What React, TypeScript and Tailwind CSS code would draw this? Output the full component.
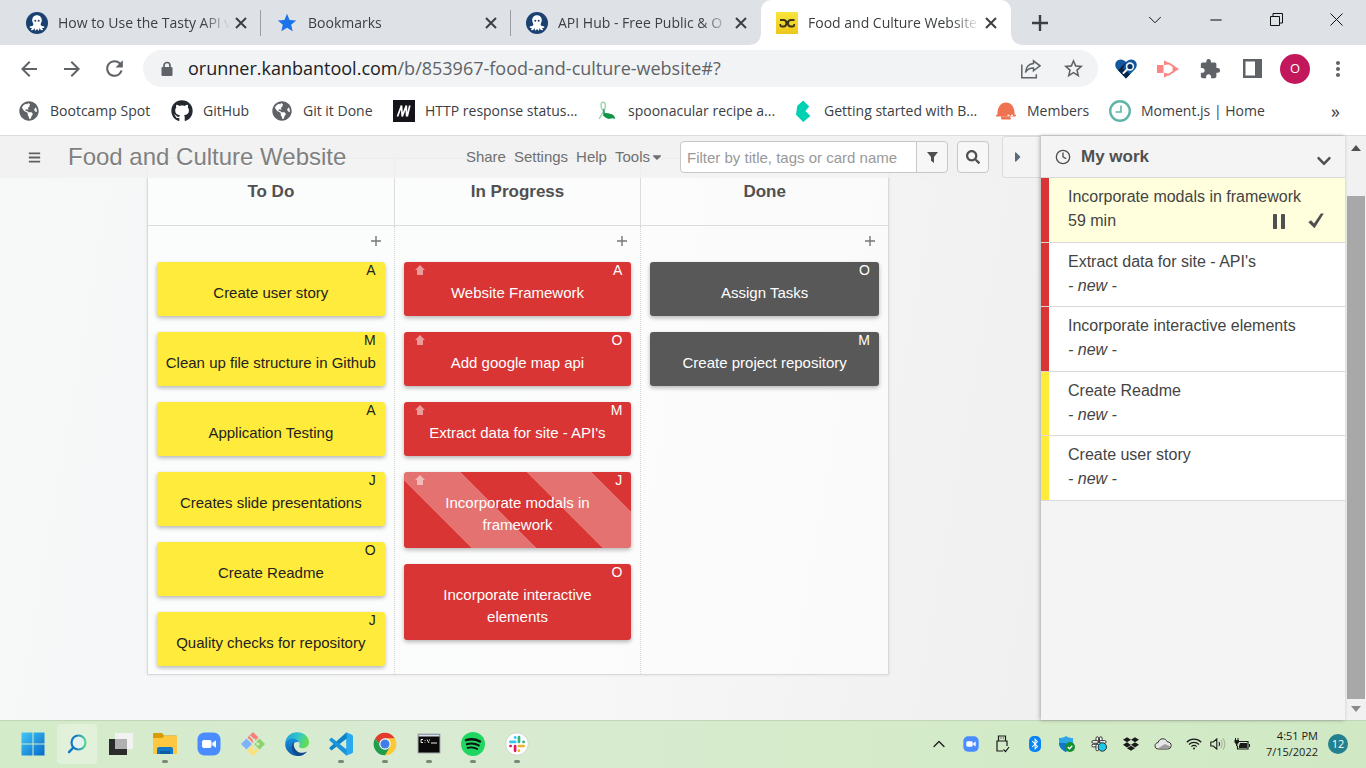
import React from "react";
import {
  MdArrowBack,
  MdArrowForward,
  MdRefresh,
  MdStarBorder,
  MdStar,
  MdExtension,
  MdMoreVert,
} from "react-icons/md";
import {
  FaBars,
  FaBluetoothB,
  FaCaretDown,
  FaCaretRight,
  FaChevronDown,
  FaDropbox,
  FaGithub,
  FaGlobeAmericas,
  FaSearch,
} from "react-icons/fa";
import { ChevronDown, ChevronUp, Minus, Clock } from "lucide-react";

/* ---------- small drawings ---------- */

function Octopus() {
  return (
    <svg viewBox="0 0 22 22" className="size-[22px] shrink-0" aria-hidden="true">
      <circle cx="11" cy="11" r="11" fill="#1b4171" />
      <path
        d="M11 3.2c-3 0-4.8 2.200-4.800 4.900 0 1.700.7 2.700 1.100 3.900.3 1.100-.6 2.300-2.300 2.300-.9 0-1.400.3-1.400.8 0 .7 1.200 1.100 2.500.9-.4.8-1.200 1.100-1.100 1.700.1.800 1.900.6 2.900-.4.500-.5.800-1 1.100-1.500-.2 1.300-.5 2.300.1 2.700.6.300 1.300-.5 1.900-1.700.6 1.200 1.300 2 1.900 1.700.6-.4.3-1.400.1-2.700.3.500.6 1 1.100 1.500 1 1 2.800 1.200 2.900.4.100-.6-.7-.9-1.100-1.700 1.300.2 2.500-.2 2.500-.9 0-.5-.5-.8-1.400-.8-1.700 0-2.600-1.200-2.300-2.300.4-1.200 1.100-2.200 1.100-3.900 0-2.700-1.800-4.900-4.800-4.900z"
        fill="#fff"
      />
      <circle cx="9.300" cy="8.800" r="1" fill="#1b4171" />
      <circle cx="12.700" cy="8.800" r="1" fill="#1b4171" />
    </svg>
  );
}

function KanbanLogo() {
  return (
    <svg viewBox="0 0 22 22" className="size-[22px] shrink-0" aria-hidden="true">
      <defs>
        <linearGradient id="kb" x1="0" y1="0" x2="0" y2="1">
          <stop offset="0" stopColor="#f7e53c" />
          <stop offset="1" stopColor="#eec61b" />
        </linearGradient>
      </defs>
      <rect width="22" height="22" fill="url(#kb)" />
      <path
        d="M4 8h3.500c2 0 2.800 1 2.800 3.200S9.500 14.500 7.500 14.500H6c-1.200 0-1.700-.6-1.700-1.800V12M18.500 8H15c-2 0-2.900 1-2.900 3.200s.9 3.300 2.900 3.300h1.500c1.200 0 1.700-.6 1.700-1.800V12M9.800 9l2.800 4.500M12.600 9L9.800 13.500"
        fill="none"
        stroke="#3b3416"
        strokeWidth="1.800"
      />
    </svg>
  );
}

function CloseIcon() {
  return (
    <svg viewBox="0 0 12 12" className="size-3" stroke="#3c4043" strokeWidth="2" aria-hidden="true">
      <path d="M1 1l10 10M11 1L1 11" />
    </svg>
  );
}

function PlusIcon() {
  return (
    <svg viewBox="0 0 16 16" className="size-4" stroke="#3c4043" strokeWidth="2.400" aria-hidden="true">
      <path d="M8 0v16M0 8h16" />
    </svg>
  );
}

function LockIcon() {
  return (
    <svg viewBox="0 0 12 16" className="h-4 w-3 shrink-0" aria-hidden="true">
      <path d="M3 6.500V4.500a3 3 0 0 1 6 0v2" fill="none" stroke="#5f6368" strokeWidth="1.700" />
      <rect x=".5" y="6" width="11" height="9" rx="1.200" fill="#5f6368" />
    </svg>
  );
}

function ShareIcon() {
  return (
    <svg viewBox="0 0 20 20" className="size-5" fill="none" stroke="#5f6368" strokeWidth="1.500" aria-hidden="true">
      <path d="M.8 5.500v13.300h14.500v-3.500" />
      <path d="M12.500 1.800l6.500 5-6.500 5V9C8.500 9 6 10.500 4.500 13.500 5 8.500 7.500 5 12.500 4.600z" />
    </svg>
  );
}

function HeartSearch() {
  return (
    <svg viewBox="0 0 22 20" className="h-5 w-[22px]" aria-hidden="true">
      <path d="M11 19.500L1.800 10C-.8 7 0 2.600 3.200 1 6-.3 9 .6 11 3c2-2.400 5-3.300 7.800-2C22 2.600 22.800 7 20.200 10z" fill="#1459a0" />
      <path d="M11 3L3 11.300l8 8.200 4-4.200-7-6z" fill="#0a2547" />
      <circle cx="15" cy="7.500" r="3.400" fill="#0b3564" stroke="#eef6fc" strokeWidth="1.600" />
      <path d="M12.300 10.200L8.500 14" stroke="#eef6fc" strokeWidth="2" strokeLinecap="round" />
    </svg>
  );
}

function CastArrow() {
  return (
    <svg viewBox="0 0 22 18" className="h-[18px] w-[22px]" aria-hidden="true">
      <rect x="0" y="5" width="6.500" height="8" fill="#fb8583" />
      <path d="M7 .3l5.500 3.200L7 5.200zM7 17.700l5.500-3.200L7 12.800zM16 5.200L22 9l-6 3.800z" fill="#fb8583" />
      <path d="M7.500 3.500H12l4.500 3v5l-4.500 3H7.500" fill="none" stroke="#fb8583" strokeWidth="1.800" />
    </svg>
  );
}

function SidePanelIcon() {
  return (
    <svg viewBox="0 0 19 19" className="size-[19px]" aria-hidden="true">
      <rect width="19" height="19" fill="#5f6368" />
      <rect x="2.500" y="2.500" width="9.500" height="14" fill="#fff" />
    </svg>
  );
}

function MdnIcon() {
  return (
    <svg viewBox="0 0 22 22" className="size-[22px]" aria-hidden="true">
      <rect width="22" height="22" fill="#15141a" />
      <path d="M4.500 16.500L8.500 5.500 9.200 16.500 13.300 5.500 13.600 16.500M16.800 5.500L14.200 16.500" stroke="#fff" strokeWidth="1.700" fill="none" />
    </svg>
  );
}

function SpoonacularIcon() {
  return (
    <svg viewBox="0 0 22 22" className="size-[22px]" aria-hidden="true">
      <path d="M6.500 10C4.500 7 4.500 2.500 7 2.300s3.200 4 1.500 7.200L3.200 18.800" fill="none" stroke="#a5d6b4" strokeWidth="1.600" />
      <path d="M7.500 9l.8 5" stroke="#3aa765" strokeWidth="1.800" />
      <path d="M7.500 13.500c2.500-1 4.500-.3 6.500.3 2.800.5 4.800 2 5.300 5.200-2-1-3.500-1-5.500-.2-2.500.7-4.500-1.500-6.800-3.300z" fill="#12954a" />
    </svg>
  );
}

function BulmaIcon() {
  return (
    <svg viewBox="0 0 22 22" className="size-[22px]" aria-hidden="true">
      <path d="M4 14.800L5.300 5.800 11.200.5l6 6-3.800 4.500 5 5-7.200 6z" fill="#00d1b2" />
    </svg>
  );
}

function MembersIcon() {
  return (
    <svg viewBox="0 0 22 22" className="size-[22px]" aria-hidden="true">
      <path d="M2.500 15C2 7 6 2.500 11 2.500S20 7 19.500 15z" fill="#ef7350" />
      <path d="M2 15.500h18M7 18.500h8" stroke="#ef7350" strokeWidth="2" strokeLinecap="round" />
      <path d="M6 17.200h9" stroke="#ef7350" strokeWidth="1.500" />
      <path d="M12.500 15.300h2M16 15.300h2" stroke="#fff" strokeWidth="1.200" />
    </svg>
  );
}

function MomentIcon() {
  return (
    <svg viewBox="0 0 22 22" className="size-[22px]" aria-hidden="true">
      <circle cx="11" cy="11" r="9.800" fill="#fff" stroke="#60b5a8" strokeWidth="2.400" />
      <path d="M12 5.500V12H6.500" fill="none" stroke="#60b5a8" strokeWidth="1.600" />
    </svg>
  );
}

function PriorityArrow() {
  return (
    <svg viewBox="0 0 10 10" className="size-[10px]" aria-hidden="true">
      <path d="M5 0l5 5H8v5H2V5H0z" fill="#fff" fillOpacity=".5" />
    </svg>
  );
}

function FunnelIcon() {
  return (
    <svg viewBox="0 0 11 11" className="size-[11px]" aria-hidden="true">
      <path d="M0 0h11L7 5v6L4 8.800V5z" fill="#505050" />
    </svg>
  );
}

function PauseIcon() {
  return (
    <svg viewBox="0 0 12 15" className="h-[15px] w-3" fill="#505050" aria-hidden="true">
      <rect x="0" y="0" width="4" height="15" rx=".8" />
      <rect x="8" y="0" width="4" height="15" rx=".8" />
    </svg>
  );
}

function CheckIcon() {
  return (
    <svg viewBox="0 0 16 16" className="size-4" aria-hidden="true">
      <path d="M.3 9.300L3 7.200l3 3.300L12.800.5h3L6.500 15.300z" fill="#505050" />
    </svg>
  );
}

/* ---------- taskbar drawings ---------- */

function WindowsIcon() {
  return (
    <svg viewBox="0 0 24 24" className="size-6" aria-hidden="true">
      <defs>
        <linearGradient id="win" x1="0" y1="0" x2="1" y2="1">
          <stop offset="0" stopColor="#42c8f7" />
          <stop offset="1" stopColor="#0669c9" />
        </linearGradient>
      </defs>
      <path d="M.5.500h11v11H.5zM12.500.500h11v11h-11zM.5 12.500h11v11H.5zM12.500 12.500h11v11h-11z" fill="url(#win)" />
    </svg>
  );
}

function TaskSearchIcon() {
  return (
    <svg viewBox="0 0 20 20" className="size-5" fill="none" strokeLinecap="round" aria-hidden="true">
      <defs>
        <linearGradient id="ts" x1="0" y1="0" x2="1" y2="0">
          <stop offset=".3" stopColor="#1378c4" />
          <stop offset="1" stopColor="#55d88f" />
        </linearGradient>
      </defs>
      <circle cx="11.500" cy="8.500" r="7" fill="#e3f2ee" stroke="url(#ts)" strokeWidth="2.200" />
      <path d="M6.300 13.700L2 18.200" stroke="#1378c4" strokeWidth="2.400" />
    </svg>
  );
}

function TaskViewIcon() {
  return (
    <svg viewBox="0 0 24 24" className="size-6" aria-hidden="true">
      <rect x="0" y="7" width="18" height="16" fill="#2b2b2b" />
      <rect x="6" y="1" width="18" height="16" fill="#f2f2f2" />
      <rect x="6" y="7" width="12" height="10" fill="#b0b0b0" />
    </svg>
  );
}

function FolderIcon() {
  return (
    <svg viewBox="0 0 24 24" className="size-6" aria-hidden="true">
      <path d="M0 2q0-1 1-1h8l2 2.500h12q1 0 1 1V12H0z" fill="#d99a05" />
      <path d="M0 6h9l2.500-2H23q1 0 1 1v16q0 1-1 1H1q-1 0-1-1z" fill="#fdc83f" />
      <path d="M4 22v-5q0-2 2-2h12q2 0 2 2v5z" fill="#1177c9" />
      <path d="M7 19h10v3H7z" fill="#0a5ca5" />
    </svg>
  );
}

function ZoomAppIcon({ small = false }: { small?: boolean }) {
  return (
    <svg viewBox="0 0 24 24" className={small ? "size-4" : "size-6"} aria-hidden="true">
      <rect x=".5" y=".5" width="23" height="23" rx="7" fill="#4a8cff" />
      <rect x="5" y="8" width="9.500" height="8" rx="2" fill="#fff" />
      <path d="M15.200 11L19 8.300v7.400L15.200 13z" fill="#fff" />
    </svg>
  );
}

function GitAppIcon() {
  return (
    <svg viewBox="0 0 24 24" className="size-6" aria-hidden="true">
      <path d="M12 0l5.500 5.500L12 11 6.500 5.500z" fill="#fb7f78" />
      <path d="M18.500 6.500L24 12l-5.500 5.500L13 12z" fill="#8bd46b" />
      <path d="M5.500 6.500L11 12l-5.500 5.500L0 12z" fill="#7fb2fa" />
      <path d="M12 13l5.500 5.500L12 24l-5.500-5.500z" fill="#fbe177" />
      <path d="M9 4l4 4v9M13 9l4 3" stroke="#d5ebca" strokeWidth="1.300" fill="none" />
      <circle cx="13" cy="8" r="1.400" fill="#d5ebca" />
      <circle cx="13" cy="17" r="1.400" fill="#d5ebca" />
      <circle cx="17" cy="12.200" r="1.400" fill="#d5ebca" />
    </svg>
  );
}

function EdgeIcon() {
  return (
    <svg viewBox="0 0 24 24" className="size-6" aria-hidden="true">
      <defs>
        <linearGradient id="e1" x1="0" y1="0" x2="1" y2=".3">
          <stop offset="0" stopColor="#1a9fe0" />
          <stop offset=".6" stopColor="#35c8c5" />
          <stop offset="1" stopColor="#64dc55" />
        </linearGradient>
        <linearGradient id="e2" x1="0" y1="0" x2="0" y2="1">
          <stop offset="0" stopColor="#1a8fe0" />
          <stop offset="1" stopColor="#0c5aa8" />
        </linearGradient>
      </defs>
      <path d="M.2 12C.2 5 5.500.200 12.200.200 19 .2 24 5 24 10.200c0 3.700-2.800 6-6.200 6-2.800 0-4.300-1.200-3.600-2.400.9-1.300.6-4.300-2.700-5.300C7 7.200 1.800 8.500.2 12z" fill="url(#e1)" />
      <path d="M.2 12C1.500 7.800 5.500 6 9.500 6.800c2.500.5 4 2 4.300 3.600-4-1.800-7.300 2.500-5 6.800 2.300 4.200 8 5.500 13 2.500-4 5.500-12.500 5.500-17.300 1.300C1.500 18.500 0 15 .2 12z" fill="url(#e2)" />
      <path d="M8.800 9.700C5.500 14 6 20.500 12 23.800c4 .4 7.800-1.300 10-4.300-7 3.500-14.500-1-13.200-9.800z" fill="#114a8b" />
    </svg>
  );
}

function VsCodeIcon() {
  return (
    <svg viewBox="0 0 24 24" className="size-6" aria-hidden="true">
      <path d="M17.200.3L23 2.800q1 .5 1 1.500v15.400q0 1-1 1.500l-5.800 2.500z" fill="#29a9f0" />
      <path d="M17.500.3L.6 15.600q-.6.600 0 1.200l1.300 1.200q.6.500 1.300 0L18 6.200z" fill="#0d83c9" />
      <path d="M17.500 23.700L.6 8.400q-.6-.6 0-1.200L1.900 6q.6-.5 1.300 0L18 17.800z" fill="#1a94dc" />
    </svg>
  );
}

function ChromeIcon() {
  return (
    <svg viewBox="0 0 24 24" className="size-6" aria-hidden="true">
      <path d="M12 12V6.300h9.800A11.300 11.300 0 0 1 12 23.300z" fill="#fcc934" />
      <path d="M12 12l5 2.800-5 8.500A11.300 11.300 0 0 1 2.200 6.300L7 14.800z" fill="#1e9e4b" />
      <path d="M2.200 6.300L7 14.800 12 6.300z" fill="#1e9e4b" />
      <path d="M12 6.300H21.800A11.300 11.300 0 0 0 2.200 6.300L7.100 12z" fill="#e33b2e" />
      <circle cx="12" cy="12" r="5.700" fill="#fff" />
      <circle cx="12" cy="12" r="4.600" fill="#3f7ee8" />
    </svg>
  );
}

function TerminalIcon() {
  return (
    <svg viewBox="0 0 24 24" className="size-6" aria-hidden="true">
      <rect x="1" y="2" width="22" height="19" fill="#0a0a0a" stroke="#a9adb0" strokeWidth="1" />
      <rect x="1.500" y="2.500" width="21" height="2" fill="#d6e0ee" />
      <path d="M6 7.500H4v3h2M8 8v.8M8 10v.6M10 7.500l2 3.500M14 11h6M12.500 7.500v1" stroke="#eee" strokeWidth="1" fill="none" />
    </svg>
  );
}

function SpotifyIcon() {
  return (
    <svg viewBox="0 0 24 24" className="size-6" fill="none" strokeLinecap="round" aria-hidden="true">
      <circle cx="12" cy="12" r="12" fill="#1ed760" />
      <path d="M5 8.200c4.500-1.400 10-.9 14 1.300" stroke="#101010" strokeWidth="2.400" />
      <path d="M5.800 12.200c4-1.100 8.500-.7 12 1.200" stroke="#101010" strokeWidth="2" />
      <path d="M6.500 15.900c3.500-.9 7-.5 9.800 1.200" stroke="#101010" strokeWidth="1.700" />
    </svg>
  );
}

function SlackIcon() {
  return (
    <svg viewBox="0 0 24 24" className="size-6" aria-hidden="true">
      <circle cx="12" cy="12" r="11.300" fill="#fff" stroke="#c7cfc4" strokeWidth=".8" />
      <g strokeWidth="2.700" strokeLinecap="round" fill="none">
        <path d="M10.200 9.900H5.400M10.200 5.400v.3" stroke="#36c5f0" />
        <path d="M14 10V5.200M18.500 9.900h.2" stroke="#2eb67d" />
        <path d="M13.900 14h4.800M13.900 18.500v.2" stroke="#ecb22e" />
        <path d="M10.100 14v4.800M5.400 14h.3" stroke="#e01e5a" />
      </g>
    </svg>
  );
}

function UsbIcon() {
  return (
    <svg viewBox="0 0 14 18" className="h-[18px] w-[14px]" fill="none" stroke="#1b1b1b" strokeWidth="1.200" aria-hidden="true">
      <path d="M2.500 6V1h7v5M4.500 3h1M6.800 3h1M7 16H1V6h10v5" />
      <path d="M7.500 14.500l2 2L13 12" />
    </svg>
  );
}

function ShieldIcon() {
  return (
    <svg viewBox="0 0 16 16" className="size-4" aria-hidden="true">
      <path d="M7 0c2 1.600 4.500 2 7 2v5c0 4-3 7-7 9C3 14 0 11 0 7V2c2.500 0 5-.4 7-2z" fill="#2da7e8" />
      <path d="M7 0v16C3 14 0 11 0 7V7h7z" fill="#1177c9" />
      <circle cx="11" cy="11" r="5" fill="#159030" />
      <path d="M8.800 11l1.700 1.700L13.300 9.800" stroke="#fff" strokeWidth="1.300" fill="none" />
    </svg>
  );
}

function SlackTrayIcon() {
  return (
    <svg viewBox="0 0 16 16" className="size-4" fill="#fff" stroke="#222" strokeWidth=".9" aria-hidden="true">
      <rect x="5" y=".8" width="2.600" height="6.500" rx="1.300" />
      <rect x="8.500" y=".8" width="2.600" height="6.500" rx="1.300" />
      <rect x=".8" y="4.600" width="6.500" height="2.600" rx="1.300" />
      <rect x=".8" y="8.300" width="6.500" height="2.600" rx="1.300" />
      <rect x="8.600" y="4.600" width="6.500" height="2.600" rx="1.300" />
      <rect x="5" y="8.300" width="2.600" height="6.500" rx="1.300" />
      <circle cx="11.300" cy="11" r="4.200" fill="#1fc8e8" />
    </svg>
  );
}

function CloudIcon() {
  return (
    <svg viewBox="0 0 18 12" className="h-3 w-[18px]" aria-hidden="true">
      <path d="M4.500 11C2.300 11 1 9.600 1 7.800s1.300-3 3-3.200C4.800 2.200 6.500.800 8.800.800c2 0 3.700 1.100 4.400 3 2.300 0 4 1.600 4 3.700S15.600 11 13.500 11z" fill="#e6e6e6" stroke="#333" strokeWidth="1" />
      <path d="M4 10.300L11 6l5.500 2.500c-.5 1.300-1.700 2-3 2z" fill="#9d9d9d" />
    </svg>
  );
}

function WifiIcon() {
  return (
    <svg viewBox="0 0 16 12" className="h-3 w-4" fill="none" stroke="#1b1b1b" strokeWidth="1.200" aria-hidden="true">
      <path d="M.8 4.200a10.200 10.200 0 0 1 14.400 0M3 6.500a7 7 0 0 1 10 0M5.300 8.600a3.900 3.900 0 0 1 5.400 0" />
      <circle cx="8" cy="10.600" r="1" fill="#1b1b1b" stroke="none" />
    </svg>
  );
}

function SoundIcon() {
  return (
    <svg viewBox="0 0 16 14" className="h-[14px] w-4" fill="none" stroke="#1b1b1b" strokeWidth="1.100" aria-hidden="true">
      <path d="M.8 5v4h2.400L6.800 12V2L3.200 5zM9 5q1.300 2 0 4" />
      <path d="M11 3q2.500 4 0 8M13 1.200q3.600 5.800 0 11.600" stroke="#a5b59e" />
    </svg>
  );
}

function BatteryIcon() {
  return (
    <svg viewBox="0 0 16 13" className="h-[13px] w-4" aria-hidden="true">
      <path d="M5 3.500h9v7.500H3.500V8" fill="none" stroke="#1b1b1b" strokeWidth="1.200" />
      <path d="M6 5h7v5H5V8zM15 6h1v3h-1zM1 0h1v2h1.500V0h1v2H5v2.500L3.500 6v2H2V6L.5 4.500V2H1z" fill="#1b1b1b" />
    </svg>
  );
}

/* ---------- browser chrome ---------- */

type Tab = { title: string; icon: React.ReactNode; active?: boolean; divider?: boolean };

const tabs: Tab[] = [
  { title: "How to Use the Tasty API v", icon: <Octopus />, divider: true },
  { title: "Bookmarks", icon: <MdStar className="size-[22px] shrink-0 text-[#1a73e8]" />, divider: true },
  { title: "API Hub - Free Public & O", icon: <Octopus /> },
  { title: "Food and Culture Website", icon: <KanbanLogo />, active: true },
];

function TabStrip() {
  return (
    <div className="flex h-[45px] bg-[#dee1e6] pl-[11px]">
      {tabs.map((tab) => (
        <div
          key={tab.title}
          className={
            "relative flex w-[250px] items-center pl-[15px] " +
            (tab.active
              ? "rounded-t-[10px] bg-white before:absolute before:bottom-0 before:-left-[10px] before:size-[10px] before:bg-[radial-gradient(circle_at_0_0,transparent_9px,#fff_10px)] after:absolute after:-right-[10px] after:bottom-0 after:size-[10px] after:bg-[radial-gradient(circle_at_100%_0,transparent_9px,#fff_10px)]"
              : "")
          }
        >
          {tab.icon}
          <span className="ml-[10px] min-w-0 flex-1 overflow-hidden text-[14px] whitespace-nowrap text-[#3c4043] [mask-image:linear-gradient(to_right,#000_84%,transparent)]">
            {tab.title}
          </span>
          <button aria-label={"Close " + tab.title} className="mr-[14px] ml-[5px]">
            <CloseIcon />
          </button>
          {tab.divider && <span className="absolute top-[10px] right-0 h-[26px] w-px bg-[#9a9da1]" />}
        </div>
      ))}
      <button aria-label="New tab" className="ml-[21px]">
        <PlusIcon />
      </button>
      <div className="ml-auto flex h-[39px] items-center">
        <button aria-label="Search tabs" className="flex w-[61px] justify-center">
          <ChevronDown size={22} strokeWidth={1} />
        </button>
        <button aria-label="Minimize" className="flex w-[61px] justify-center">
          <Minus size={18} strokeWidth={1.3} />
        </button>
        <button aria-label="Restore" className="flex w-[60px] justify-center">
          <svg viewBox="0 0 13 13" className="size-[13px]" fill="none" stroke="#111" aria-hidden="true">
            <path d="M.5 3.500h9v9h-9zM3 3V.500h9.500V10H10" />
          </svg>
        </button>
        <button aria-label="Close window" className="flex w-[60px] justify-center">
          <svg viewBox="0 0 13 13" className="size-[13px]" stroke="#111" aria-hidden="true">
            <path d="M.5.500l12 12M12.500.500l-12 12" />
          </svg>
        </button>
      </div>
    </div>
  );
}

function AddressBar() {
  return (
    <div className="flex h-[47px] items-center bg-white pr-[19px] pl-2 text-[#5f6368]">
      <button aria-label="Back" className="flex w-[42px] justify-center">
        <MdArrowBack className="size-6" />
      </button>
      <button aria-label="Forward" className="flex w-[43px] justify-center">
        <MdArrowForward className="size-6" />
      </button>
      <button aria-label="Reload" className="flex w-[42px] justify-center">
        <MdRefresh className="size-[25px]" />
      </button>
      <div className="ml-2 flex h-[37px] flex-1 items-center rounded-full bg-[#f1f3f4] pr-[13px] pl-[18px]">
        <LockIcon />
        <a href="#?" className="ml-[15px] flex-1 text-[18px] whitespace-nowrap">
          <span className="text-[#202124]">orunner.kanbantool.com</span>/b/853967-food-and-culture-website#?
        </a>
        <button aria-label="Share this page" className="mr-[21px]">
          <ShareIcon />
        </button>
        <button aria-label="Bookmark this tab">
          <MdStarBorder className="size-[23px]" />
        </button>
      </div>
      <div className="flex items-center">
        <button aria-label="Saved search" className="ml-[17px]">
          <HeartSearch />
        </button>
        <button aria-label="Screen recorder" className="ml-5">
          <CastArrow />
        </button>
        <button aria-label="Extensions" className="ml-5">
          <MdExtension className="size-[22px]" />
        </button>
        <button aria-label="Side panel" className="ml-[22px]">
          <SidePanelIcon />
        </button>
        <button className="ml-[18px] size-[30px] rounded-full bg-[#c2185b] text-[13px] text-white">O</button>
        <button aria-label="Menu" className="ml-4 -mr-[3px]">
          <MdMoreVert className="size-6" />
        </button>
      </div>
    </div>
  );
}

const bookmarks = [
  { label: "Bootcamp Spot", icon: <FaGlobeAmericas className="mx-px size-5 text-[#5f6368]" /> },
  { label: "GitHub", icon: <FaGithub className="size-[22px] text-[#24292f]" /> },
  { label: "Git it Done", icon: <FaGlobeAmericas className="mx-px size-5 text-[#5f6368]" /> },
  { label: "HTTP response status...", icon: <MdnIcon /> },
  { label: "spoonacular recipe a...", icon: <SpoonacularIcon /> },
  { label: "Getting started with B...", icon: <BulmaIcon /> },
  { label: "Members", icon: <MembersIcon /> },
  { label: "Moment.js | Home", icon: <MomentIcon /> },
];

function BookmarksBar() {
  return (
    <nav className="grid h-11 grid-cols-[153px_100px_122px_203px_196px_203px_114px_1fr_auto] items-center border-b border-[#dadce0] bg-white pr-[26px] pb-[6px] pl-[18px] text-[14px] whitespace-nowrap text-[#3c4043]">
      {bookmarks.map((b) => (
        <a key={b.label} href="#" className="flex items-center gap-[10px]">
          {b.icon}
          {b.label}
        </a>
      ))}
      <button aria-label="More bookmarks" className="text-[18px] leading-5">
        »
      </button>
    </nav>
  );
}

/* ---------- kanban board ---------- */

type Card = { title: string; who: string; priority?: boolean; active?: boolean };
type Column = { name: string; tone: string; cards: Card[] };

const columns: Column[] = [
  {
    name: "To Do",
    tone: "bg-[#ffeb3b] text-[#222]",
    cards: [
      { title: "Create user story", who: "A" },
      { title: "Clean up file structure in Github", who: "M" },
      { title: "Application Testing", who: "A" },
      { title: "Creates slide presentations", who: "J" },
      { title: "Create Readme", who: "O" },
      { title: "Quality checks for repository", who: "J" },
    ],
  },
  {
    name: "In Progress",
    tone: "bg-[#d83534] text-white",
    cards: [
      { title: "Website Framework", who: "A", priority: true },
      { title: "Add google map api", who: "O", priority: true },
      { title: "Extract data for site - API's", who: "M", priority: true },
      { title: "Incorporate modals in framework", who: "J", priority: true, active: true },
      { title: "Incorporate interactive elements", who: "O" },
    ],
  },
  {
    name: "Done",
    tone: "bg-[#585858] text-white",
    cards: [
      { title: "Assign Tasks", who: "O" },
      { title: "Create project repository", who: "M" },
    ],
  },
];

function BoardCard({ card, tone }: { card: Card; tone: string }) {
  return (
    <article
      className={
        "relative rounded-[3px] px-1 pt-5 pb-3 text-center text-[15px] leading-[22px] shadow-[0_2px_4px_rgba(0,0,0,0.28)] " +
        tone +
        (card.active
          ? " bg-[linear-gradient(45deg,transparent_25%,rgba(255,255,255,0.3)_25%,rgba(255,255,255,0.3)_50%,transparent_50%,transparent_75%,rgba(255,255,255,0.3)_75%)] bg-[length:131px_131px] bg-[position:2px_76px]"
          : "")
      }
    >
      {card.priority && (
        <span className="absolute top-[3px] left-[11px]">
          <PriorityArrow />
        </span>
      )}
      <span className="absolute top-0 right-[9px] text-[14px] leading-[17px]">{card.who}</span>
      <h3 className={card.title.startsWith("Incorporate") ? "px-6" : ""}>{card.title}</h3>
    </article>
  );
}

function Board() {
  return (
    <section className="-mt-5 mr-[152px] ml-[147px] grid grid-cols-3 border border-[#d9d9d9] bg-white/60 shadow-[0_0_3px_rgba(0,0,0,0.1)]">
      {columns.map((col) => (
        <div key={col.name} className="group flex flex-col">
          <h2 className="h-[67px] border-r border-b border-[#dcdcdc] pt-[21px] text-center text-[17px] leading-6 font-bold text-[#505050] group-last:border-r-0">
            {col.name}
          </h2>
          <div className="flex flex-1 flex-col gap-4 border-r border-dotted border-[#d4d4d4] px-[9px] pb-2 group-last:border-r-0">
            <button
              aria-label={"Add card to " + col.name}
              className="-mb-4 flex h-9 items-start justify-end pt-[10px] pr-1"
            >
              <svg viewBox="0 0 10 10" className="size-[10px]" stroke="#777" strokeWidth="1.400" aria-hidden="true">
                <path d="M5 0v10M0 5h10" />
              </svg>
            </button>
            {col.cards.map((card) => (
              <BoardCard key={card.title} card={card} tone={col.tone} />
            ))}
          </div>
        </div>
      ))}
    </section>
  );
}

function BoardHeader() {
  return (
    <header className="relative z-10 flex h-[42px] items-center bg-[#f1f1f1]/85 text-[15px] text-[#707070]">
      <button aria-label="Open menu" className="ml-7">
        <FaBars className="size-[13px] text-[#606060]" />
      </button>
      <h1 className="ml-[27px] text-[24px] text-[#808080] [text-shadow:0_1px_0_#fff]">Food and Culture Website</h1>
      <nav className="ml-auto flex items-center gap-2">
        <a href="#share">Share</a>
        <a href="#settings">Settings</a>
        <a href="#help">Help</a>
        <button className="flex items-center">
          Tools
          <FaCaretDown className="size-[14px]" />
        </button>
      </nav>
      <form className="ml-4 flex">
        <input
          aria-label="Filter cards"
          placeholder="Filter by title, tags or card name"
          className="h-8 w-[237px] rounded-l-[4px] border border-[#c8c8c8] bg-white px-[6px] text-[15px] placeholder:text-[#999]"
        />
        <button
          type="button"
          aria-label="Filter"
          className="-ml-px flex w-8 items-center justify-center rounded-r-[4px] border border-[#c8c8c8] bg-[#f7f7f7]"
        >
          <FunnelIcon />
        </button>
      </form>
      <button
        aria-label="Search"
        className="ml-[9px] flex size-8 items-center justify-center rounded-[4px] border border-[#c8c8c8] bg-[#f7f7f7]"
      >
        <FaSearch className="size-[14px] text-[#505050]" />
      </button>
      <button
        aria-label="Collapse panel"
        className="ml-[13px] flex h-full w-[39px] items-center rounded-l-[4px] border border-r-0 border-[#dcdcdc] bg-[#f4f4f4] pl-[7px]"
      >
        <FaCaretRight className="size-4 text-[#5a6b7c]" />
      </button>
    </header>
  );
}

/* ---------- my work panel ---------- */

const work = [
  { title: "Incorporate modals in framework", note: "59 min", bar: "border-[#d83534]", current: true },
  { title: "Extract data for site - API's", note: "- new -", bar: "border-[#d83534]" },
  { title: "Incorporate interactive elements", note: "- new -", bar: "border-[#d83534]" },
  { title: "Create Readme", note: "- new -", bar: "border-[#ffeb3b]" },
  { title: "Create user story", note: "- new -", bar: "border-[#ffeb3b]" },
];

function MyWork() {
  return (
    <aside className="relative z-20 w-[304px] shrink-0 bg-[#f4f4f4] shadow-[-1px_0_4px_rgba(0,0,0,0.3)]">
      <div className="flex h-[42px] items-center border-b border-[#d9d9d9] pr-[13px] pl-[14px] text-[#505050]">
        <Clock size={16} strokeWidth={2} />
        <h2 className="ml-[10px] flex-1 text-[17px] font-bold">My work</h2>
        <button aria-label="Toggle my work" className="pt-2">
          <FaChevronDown className="size-4" />
        </button>
      </div>
      <ul className="grid h-[323px] grid-rows-5">
        {work.map((w) => (
          <li
            key={w.title}
            className={"border-b border-b-[#d9d9d9] " + (w.current ? "bg-[#ffffdd]" : "bg-white")}
          >
            <div className={"flex h-full flex-col border-l-8 pt-[7px] pl-[19px] text-[16px] leading-6 text-[#444] " + w.bar}>
              <span>{w.title}</span>
              <div className="flex items-center pr-[21px]">
                <span className={w.current ? "" : "italic"}>{w.note}</span>
                {w.current && (
                  <span className="ml-auto flex items-center gap-[23px]">
                    <button aria-label="Pause">
                      <PauseIcon />
                    </button>
                    <button aria-label="Complete">
                      <CheckIcon />
                    </button>
                  </span>
                )}
              </div>
            </div>
          </li>
        ))}
      </ul>
    </aside>
  );
}

function ScrollRail() {
  return (
    <div className="flex w-[21px] flex-col items-center bg-[#f1f1f1] pt-[9px] pb-2" aria-hidden="true">
      <svg viewBox="0 0 10 6" className="h-[6px] w-[10px]">
        <path d="M0 6l5-6 5 6z" fill="#505050" />
      </svg>
      <div className="mt-[45px] mb-[7px] w-[18px] flex-1 bg-[#a8a8a8]" />
      <svg viewBox="0 0 10 6" className="h-[6px] w-[10px]">
        <path d="M0 0l5 6 5-6z" fill="#8a8a8a" />
      </svg>
    </div>
  );
}

/* ---------- taskbar ---------- */

const apps = [
  { name: "Start", icon: <WindowsIcon /> },
  { name: "Search", icon: <TaskSearchIcon />, focus: true },
  { name: "Task view", icon: <TaskViewIcon /> },
  { name: "File Explorer", icon: <FolderIcon />, running: true },
  { name: "Zoom", icon: <ZoomAppIcon /> },
  { name: "Git", icon: <GitAppIcon /> },
  { name: "Edge", icon: <EdgeIcon /> },
  { name: "VS Code", icon: <VsCodeIcon />, running: true },
  { name: "Chrome", icon: <ChromeIcon />, running: true },
  { name: "Command Prompt", icon: <TerminalIcon />, running: true },
  { name: "Spotify", icon: <SpotifyIcon />, running: true },
  { name: "Slack", icon: <SlackIcon />, running: true },
];

function Taskbar() {
  return (
    <footer className="flex h-12 items-center border-t border-[#c3d4ba] bg-[linear-gradient(90deg,#d3ebc8,#d9ebd3_30%,#d5ebca_60%,#d0e9c4)] pr-[18px] pb-px pl-[11px] text-[#1b1b1b]">
      {apps.map((a) => (
        <button
          key={a.name}
          aria-label={a.name}
          className={
            "relative mx-[2px] flex size-10 items-center justify-center rounded-[4px] " + (a.focus ? "bg-white/30" : "")
          }
        >
          {a.icon}
          {a.running && <span className="absolute bottom-px left-[17px] h-[3px] w-[6px] rounded-full bg-[#7d8678]" />}
        </button>
      ))}
      <div className="ml-auto flex items-center">
        <div className="flex items-center *:flex *:w-8 *:justify-center">
          <button aria-label="Hidden icons">
            <ChevronUp size={20} strokeWidth={1.5} />
          </button>
          <button aria-label="Zoom meeting">
            <ZoomAppIcon small />
          </button>
          <button aria-label="Eject">
            <UsbIcon />
          </button>
          <button aria-label="Bluetooth">
            <span className="flex h-4 w-3 items-center justify-center rounded-[5px] bg-[#0a84f5] text-white">
              <FaBluetoothB className="size-3" />
            </span>
          </button>
          <button aria-label="Security">
            <ShieldIcon />
          </button>
          <button aria-label="Slack status">
            <SlackTrayIcon />
          </button>
          <button aria-label="Dropbox">
            <FaDropbox className="size-4" />
          </button>
          <button aria-label="OneDrive">
            <CloudIcon />
          </button>
        </div>
        <div className="ml-[7px] flex items-center gap-2">
          <WifiIcon />
          <SoundIcon />
          <BatteryIcon />
        </div>
        <div className="ml-4 text-right text-[11px] leading-4">
          <div>4:51 PM</div>
          <div>7/15/2022</div>
        </div>
        <button className="ml-[10px] size-5 rounded-full bg-[#23808f] text-[11px] text-white">12</button>
      </div>
    </footer>
  );
}

export default function App() {
  return (
    <div className="flex min-h-screen flex-col font-['Open_Sans','Noto_Sans',sans-serif]">
      <TabStrip />
      <AddressBar />
      <BookmarksBar />
      <main className="flex flex-1 font-['Liberation_Sans',Arial,sans-serif]">
        <div className="min-w-0 flex-1 bg-[linear-gradient(100deg,#f7f9f8_0%,#f6f7f8_20%,#f7f7f7_60%,#f2f2f2_85%,#f0f0f1_100%)]">
          <BoardHeader />
          <Board />
        </div>
        <MyWork />
        <ScrollRail />
      </main>
      <Taskbar />
    </div>
  );
}
